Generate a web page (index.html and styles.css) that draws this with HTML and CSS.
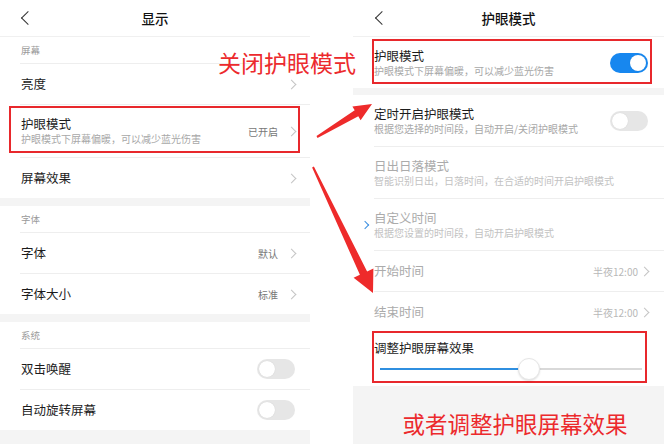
FILE: index.html
```html
<!DOCTYPE html>
<html lang="zh-CN">
<head>
    <meta charset="UTF-8">
    <meta name="viewport" content="width=device-width, initial-scale=1.0">
    <title>显示 / 护眼模式</title>
    <link rel="stylesheet" href="styles.css">
</head>
<body>
<div class="screen">

    <!-- 显示 -->
    <section class="phone phone-left">
        <header class="nav">
            <i class="back"></i>
            <span class="nav-title">显示</span>
        </header>

        <div class="group">
            <div class="group-title">屏幕</div>
            <div class="row">
                <span class="row-title">亮度</span>
                <i class="chev"></i>
            </div>
            <div class="row double mark">
                <div class="text">
                    <span class="row-title">护眼模式</span>
                    <span class="row-sub">护眼模式下屏幕偏暖，可以减少蓝光伤害</span>
                </div>
                <span class="value">已开启</span>
                <i class="chev"></i>
            </div>
            <div class="row">
                <span class="row-title">屏幕效果</span>
                <i class="chev"></i>
            </div>
        </div>

        <div class="group">
            <div class="group-title">字体</div>
            <div class="row">
                <span class="row-title">字体</span>
                <span class="value">默认</span>
                <i class="chev"></i>
            </div>
            <div class="row">
                <span class="row-title">字体大小</span>
                <span class="value">标准</span>
                <i class="chev"></i>
            </div>
        </div>

        <div class="group">
            <div class="group-title">系统</div>
            <div class="row">
                <span class="row-title">双击唤醒</span>
                <i class="switch"></i>
            </div>
            <div class="row">
                <span class="row-title">自动旋转屏幕</span>
                <i class="switch"></i>
            </div>
        </div>
    </section>

    <!-- 护眼模式 -->
    <section class="phone phone-right">
        <header class="nav">
            <i class="back"></i>
            <span class="nav-title">护眼模式</span>
        </header>

        <div class="group">
            <div class="row double mark">
                <div class="text">
                    <span class="row-title">护眼模式</span>
                    <span class="row-sub">护眼模式下屏幕偏暖，可以减少蓝光伤害</span>
                </div>
                <i class="switch on"></i>
            </div>
        </div>

        <div class="group">
            <div class="row double">
                <div class="text">
                    <span class="row-title">定时开启护眼模式</span>
                    <span class="row-sub">根据您选择的时间段，自动开启/关闭护眼模式</span>
                </div>
                <i class="switch"></i>
            </div>
            <div class="row double off">
                <div class="text">
                    <span class="row-title">日出日落模式</span>
                    <span class="row-sub">智能识别日出，日落时间，在合适的时间开启护眼模式</span>
                </div>
            </div>
            <div class="row double off">
                <i class="picked"></i>
                <div class="text">
                    <span class="row-title">自定义时间</span>
                    <span class="row-sub">根据您设置的时间段，自动开启护眼模式</span>
                </div>
            </div>
            <div class="row off">
                <span class="row-title">开始时间</span>
                <span class="value">半夜12:00</span>
                <i class="chev"></i>
            </div>
            <div class="row off">
                <span class="row-title">结束时间</span>
                <span class="value">半夜12:00</span>
                <i class="chev"></i>
            </div>
            <div class="effect mark">
                <span class="row-title">调整护眼屏幕效果</span>
                <div class="slider">
                    <div class="track" style="--level: 57%"></div>
                    <i class="thumb" style="left: 57%"></i>
                </div>
            </div>
        </div>

        <footer class="tip">或者调整护眼屏幕效果</footer>
    </section>

    <div class="note">关闭护眼模式</div>

    <svg class="arrows" width="664" height="444" viewBox="0 0 664 444">
        <polygon points="316.5,136.1 354.7,110.3 352.4,106.4 372,104 360.6,120.2 358.3,116.3 317.5,137.9"/>
        <polygon points="313.9,166.6 367.1,271.4 373.4,268.4 373,293 353.6,277.8 359.9,274.8 312.1,167.4"/>
    </svg>
</div>
</body>
</html>
```

FILE: styles.css
```css
* {
    box-sizing: border-box;
    margin: 0;
    padding: 0;
}
body {
    background: #fff;
    font-family: "Noto Sans CJK SC", "Noto Sans", sans-serif;
    color: #1c1c1c;
}
.screen {
    position: relative;
    width: 664px;
    height: 444px;
    display: flex;
    justify-content: space-between;
    overflow: hidden;
}

/* phone panels */
.phone {
    display: flex;
    flex-direction: column;
    background: #f4f4f4;
}
.phone-left {
    width: 310px;
}
.phone-right {
    width: 311px;
}
.nav {
    height: 37px;
    flex-shrink: 0;
    background: #fff;
    border-bottom: 1px solid #f0f0f0;
    display: grid;
    grid-template-columns: 1fr auto 1fr;
    align-items: center;
}
.nav-title {
    font-size: 13.5px;
    font-weight: 500;
    color: #111;
}
.back {
    width: 10px;
    height: 10px;
    border-left: 1.5px solid #333;
    border-bottom: 1.5px solid #333;
    transform: rotate(45deg);
    margin-left: 23px;
}
.phone-right .back {
    margin-left: 24px;
}

/* lists */
.group {
    background: #fff;
    padding-left: 20px;
    margin-bottom: 8px;
}
.phone-right .group {
    padding-left: 21px;
    margin-bottom: 7px;
}
.group-title {
    height: 26px;
    padding-left: 1px;
    display: flex;
    align-items: center;
    font-size: 9.5px;
    color: #9a9a9a;
}
.row {
    position: relative;
    height: 41px;
    display: flex;
    align-items: center;
    padding: 0 15px 0 1px;
    border-top: 1px solid #eeeeee;
}
.phone-right .row {
    padding: 0 16px 0 0;
}
.row:first-child {
    border-top: 0;
}
.phone-left .double {
    height: 53px;
}
.phone-right .double {
    height: 52px;
}
.phone-right .double:first-child {
    height: 51px;
}
.text {
    flex: 1;
    display: flex;
    flex-direction: column;
}
.row-title {
    flex: 1;
    font-size: 12.5px;
    line-height: 16px;
}
.row-sub {
    font-size: 10px;
    line-height: 14px;
    color: #a8a8a8;
}
.value {
    font-size: 10px;
    color: #777;
    margin-right: 10px;
}
.phone-right .value {
    color: #b8b8b8;
    margin-right: 3px;
}
.off .row-title {
    color: #ababab;
}
.off .row-sub {
    color: #c2c2c2;
}
.chev {
    width: 7px;
    height: 7px;
    border-top: 1px solid #c4c4c4;
    border-right: 1px solid #c4c4c4;
    transform: rotate(45deg);
}
.picked {
    position: absolute;
    left: -12px;
    top: 50%;
    width: 6px;
    height: 6px;
    margin-top: -3px;
    border-top: 1.5px solid #3b8fe0;
    border-right: 1.5px solid #3b8fe0;
    transform: rotate(45deg);
}

/* switches */
.switch {
    position: relative;
    width: 38px;
    height: 20px;
    border-radius: 10px;
    background: #e6e6e6;
}
.switch::after {
    content: "";
    position: absolute;
    top: 2px;
    left: 2px;
    width: 16px;
    height: 16px;
    border-radius: 50%;
    background: #fff;
    box-shadow: 0 0 1px rgba(0, 0, 0, 0.15);
}
.switch.on {
    background: #1787ef;
}
.switch.on::after {
    left: 20px;
}

/* brightness slider */
.effect {
    position: relative;
    height: 54px;
    padding: 8px 22px 7px 6px;
}
.effect .row-title {
    display: block;
    margin-left: -6px;
}
.slider {
    position: relative;
    height: 20px;
    margin-top: 3px;
    display: flex;
    align-items: center;
}
.track {
    width: 100%;
    height: 1.5px;
    background: linear-gradient(to right, #2f8fe0 var(--level), #d9d9d9 var(--level));
}
.thumb {
    position: absolute;
    top: -1px;
    width: 22px;
    height: 22px;
    margin-left: -11px;
    border-radius: 50%;
    background: #fff;
    border: 1px solid #e6e6e6;
    box-shadow: 0 1px 2px rgba(0, 0, 0, 0.12);
}

/* red callouts */
.mark::before {
    content: "";
    position: absolute;
    border: 2px solid #e8282c;
    pointer-events: none;
}
.phone-left .mark::before {
    top: 1px;
    bottom: 4px;
    left: -11px;
    right: 10px;
}
.phone-right .row.mark::before {
    top: 2px;
    bottom: 4px;
    left: -2px;
    right: 12px;
}
.effect.mark::before {
    top: -1px;
    bottom: 3px;
    left: -2px;
    right: 17px;
}
.tip {
    flex: 1;
    display: flex;
    align-items: center;
    justify-content: center;
    padding: 8px 0 0 13px;
    font-size: 22.5px;
    color: #ec2a2d;
}
.note {
    position: absolute;
    left: 218px;
    top: 50px;
    font-size: 23px;
    line-height: 24px;
    color: #ec2a2d;
}
.arrows {
    position: absolute;
    left: 0;
    top: 0;
    fill: #ee2b2b;
    pointer-events: none;
}
```
